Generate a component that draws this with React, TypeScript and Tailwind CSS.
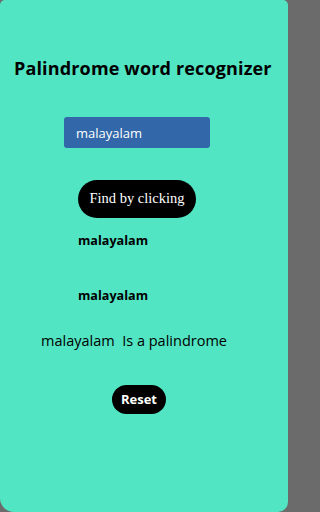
import { useState } from "react";

export default function App() {
  const [word, setWord] = useState("malayalam");
  const [checked, setChecked] = useState("malayalam");

  const reversed = checked.split("").reverse().join("");
  const isPal = checked.length > 0 && checked === reversed;

  return (
    <div className="min-h-screen w-full bg-[#6b6b6b]">
      <div
        className="w-[288px] h-[512px] bg-[#52e5c3] rounded-tl-[5px] rounded-tr-[5px] rounded-bl-[14px] rounded-br-[10px] flex flex-col text-black"
        style={{ fontFamily: '"Open Sans", "DejaVu Sans", sans-serif' }}
      >
        <h1 className="mt-[56px] ml-[14px] text-[18px] leading-[24px] font-bold tracking-[0.15px] whitespace-nowrap">
          Palindrome word recognizer
        </h1>

        <input
          value={word}
          onChange={(e) => setWord(e.target.value)}
          className="mt-[37px] ml-[64px] w-[146px] h-[31px] rounded-[3px] bg-[#3267a9] text-white text-[13px] px-[12px] outline-none"
        />

        <button
          onClick={() => setChecked(word)}
          className="mt-[32px] ml-[78px] w-[118px] h-[38px] rounded-full bg-black text-white text-[14.5px]"
          style={{ fontFamily: '"Liberation Serif", "DejaVu Serif", serif' }}
        >
          Find by clicking
        </button>

        <div className="ml-[78px] mt-[14px] text-[12.6px] leading-[18px] font-bold">
          {checked}
        </div>
        <div className="ml-[78px] mt-[37px] text-[12.6px] leading-[18px] font-bold">
          {reversed}
        </div>
        <div className="ml-[41px] mt-[26px] text-[14.5px] leading-[20px] whitespace-pre">
          {checked + "  " + (isPal ? "Is a palindrome" : "Is not a palindrome")}
        </div>

        <button
          onClick={() => {
            setWord("");
            setChecked("");
          }}
          className="mt-[34px] ml-[112px] w-[54px] h-[29px] rounded-full bg-black text-white text-[13px] font-bold"
        >
          Reset
        </button>
      </div>
    </div>
  );
}
